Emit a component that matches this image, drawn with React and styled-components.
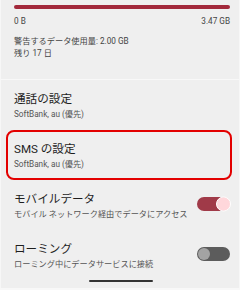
import React from "react";
import styled, { createGlobalStyle } from "styled-components";

const Global = createGlobalStyle`
  html, body { margin: 0; padding: 0; background: #efefef; }
  body { font-family: Roboto, "Noto Sans CJK JP", sans-serif; }
`;

const Screen = styled.div`
  width: 240px;
  height: 290px;
  box-sizing: border-box;
  background: #efefef;
  border-left: 1px solid #f7f7f7;
  border-right: 1px solid #f7f7f7;
  border-bottom: 2px solid #f8f8f8;
  overflow: hidden;
  display: flex;
  flex-direction: column;
  position: relative;
`;

const Usage = styled.section`
  height: 80px;
  box-sizing: border-box;
  padding: 5px 9px 0 13px;
  border-bottom: 1px solid #f8f8f8;
`;

const Bar = styled.div`
  height: 4px;
  border-radius: 2px;
  background: #a2293b;
`;

const Scale = styled.div`
  display: flex;
  justify-content: space-between;
  margin-top: 7px;
  font-size: 8.2px;
  line-height: 10px;
  color: #444;
`;

const Note = styled.div`
  font-size: 8.2px;
  line-height: 12px;
  color: #444;
  margin-top: ${(p) => p.$gap || 0}px;
`;

const Row = styled.div`
  height: 50px;
  box-sizing: border-box;
  display: flex;
  align-items: flex-start;
  padding: 12px 9px 0 13px;
  ${(p) =>
    p.$highlight &&
    `
    margin: 0 7px 0 5px;
    padding: 10px 0 0 6px;
    border: 2px solid #e30000;
    border-radius: 8px;
  `}
  ${(p) => p.$divider && `border-bottom: 1px solid #f8f8f8;`}
`;

const Texts = styled.div`
  flex: 1;
  min-width: 0;
`;

const Title = styled.div`
  font-size: 11.6px;
  line-height: 15px;
  color: #1e1e1e;
`;

const Sub = styled.div`
  margin-top: 1px;
  font-size: 8.2px;
  line-height: 12px;
  color: #555;
  white-space: nowrap;
`;

const Track = styled.div`
  margin-top: 5px;
  width: 33px;
  height: 14px;
  border-radius: 7px;
  flex: none;
  position: relative;
  background: ${(p) => (p.$on ? "#a03a48" : "#5c5c5c")};
`;

const Thumb = styled.div`
  position: absolute;
  top: 50%;
  transform: translateY(-50%);
  box-sizing: border-box;
  border-radius: 50%;
  ${(p) =>
    p.$on
      ? `right: -1px; width: 15px; height: 15px; background: #ffd7db; border: 1.5px solid #fff;`
      : `left: 1px; width: 12px; height: 12px; background: #a3a3a3;`}
`;

const HomeBar = styled.div`
  position: absolute;
  left: 88px;
  bottom: 6px;
  width: 64px;
  height: 2px;
  border-radius: 1px;
  background: #333;
`;

const Toggle = ({ on }) => (
  <Track $on={on}>
    <Thumb $on={on} />
  </Track>
);

export default function App() {
  return (
    <>
      <Global />
      <Screen>
        <Usage>
          <Bar />
          <Scale>
            <span>0 B</span>
            <span>3.47 GB</span>
          </Scale>
          <Note $gap={9}>警告するデータ使用量: 2.00 GB</Note>
          <Note>残り 17 日</Note>
        </Usage>
        <Row>
          <Texts>
            <Title>通話の設定</Title>
            <Sub>SoftBank, au (優先)</Sub>
          </Texts>
        </Row>
        <Row $highlight>
          <Texts>
            <Title>SMS の設定</Title>
            <Sub>SoftBank, au (優先)</Sub>
          </Texts>
        </Row>
        <Row>
          <Texts>
            <Title>モバイルデータ</Title>
            <Sub>モバイル ネットワーク経由でデータにアクセス</Sub>
          </Texts>
          <Toggle on />
        </Row>
        <Row>
          <Texts>
            <Title>ローミング</Title>
            <Sub>ローミング中にデータサービスに接続</Sub>
          </Texts>
          <Toggle on={false} />
        </Row>
        <HomeBar />
      </Screen>
    </>
  );
}
